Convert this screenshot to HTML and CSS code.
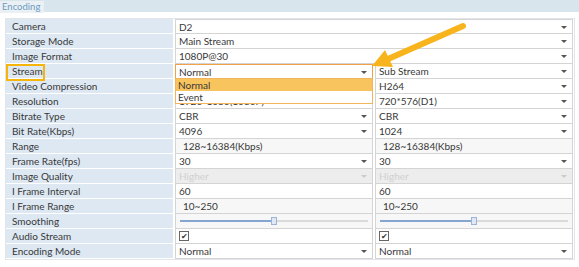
FILE: index.html
```html
<!DOCTYPE html>
<html lang="en">
<head>
    <meta charset="UTF-8">
    <title>Encoding</title>
    <link rel="stylesheet" href="styles.css">
</head>
<body>
<div class="page">
    <!-- Tab bar -->
    <div class="tabbar"><span class="tab">Encoding</span></div>

    <!-- Encoding form -->
    <div class="form">
        <div class="lbl">Camera</div>
        <div class="val sel top span2">D2</div>

        <div class="lbl">Storage Mode</div>
        <div class="val sel span2">Main Stream</div>

        <div class="lbl">Image Format</div>
        <div class="val sel span2">1080P@30</div>

        <div class="lbl mark-cell"><span class="mark"></span>Stream</div>
        <div class="val sel focus">Normal
            <div class="dropdown">
                <div class="opt on">Normal</div>
                <div class="opt">Event</div>
            </div>
        </div>
        <div class="val sel">Sub Stream</div>

        <div class="lbl">Video Compression</div>
        <div class="val sel">Normal</div>
        <div class="val sel">H264</div>

        <div class="lbl">Resolution</div>
        <div class="val sel">1920*1080(1080P)</div>
        <div class="val sel">720*576(D1)</div>

        <div class="lbl">Bitrate Type</div>
        <div class="val sel">CBR</div>
        <div class="val sel">CBR</div>

        <div class="lbl">Bit Rate(Kbps)</div>
        <div class="val sel">4096</div>
        <div class="val sel">1024</div>

        <div class="lbl">Range</div>
        <div class="val plain">128~16384(Kbps)</div>
        <div class="val plain">128~16384(Kbps)</div>

        <div class="lbl">Frame Rate(fps)</div>
        <div class="val sel">30</div>
        <div class="val sel">30</div>

        <div class="lbl">Image Quality</div>
        <div class="val sel off">Higher</div>
        <div class="val sel off">Higher</div>

        <div class="lbl">I Frame Interval</div>
        <div class="val">60</div>
        <div class="val">60</div>

        <div class="lbl">I Frame Range</div>
        <div class="val plain">10~250</div>
        <div class="val plain">10~250</div>

        <div class="lbl">Smoothing</div>
        <div class="val slider"><span class="track"><span class="fill" style="width:50%"></span><span class="knob" style="left:50%"></span></span></div>
        <div class="val slider"><span class="track"><span class="fill" style="width:50%"></span><span class="knob" style="left:50%"></span></span></div>

        <div class="lbl">Audio Stream</div>
        <div class="val"><span class="check">&#10004;</span></div>
        <div class="val"><span class="check">&#10004;</span></div>

        <div class="lbl">Encoding Mode</div>
        <div class="val sel">Normal</div>
        <div class="val sel">Normal</div>
    </div>

    <!-- Annotation arrow and mouse pointer -->
    <svg class="overlay" width="579" height="267" viewBox="0 0 579 267">
        <line x1="463" y1="26" x2="388" y2="59" stroke="#f7b41c" stroke-width="6" stroke-linecap="round"/>
        <polygon points="372,66 385,50 393,67" fill="#f7b41c"/>
        <path d="M272 68 L272 80 L275 77 L277 82 L279 81 L277 76 L281 76 Z" fill="#fff" stroke="#444" stroke-width="0.8"/>
    </svg>
</div>
</body>
</html>
```

FILE: styles.css
```css
* {
    margin: 0;
    padding: 0;
    box-sizing: border-box;
}
body {
    background: #fff;
    font-family: Lato, "Open Sans", sans-serif;
    font-size: 10px;
    color: #383838;
}
.page {
    position: relative;
    width: 579px;
    height: 267px;
    overflow: hidden;
}
.tabbar {
    height: 12px;
    background: #d9e5ec;
}
.tab {
    display: inline-block;
    height: 12px;
    padding: 0 4px 0 2px;
    background: #eaf0f3;
    color: #6a9cc4;
    font-size: 9.5px;
    line-height: 12px;
}
.form {
    display: grid;
    grid-template-columns: 167px 198px 198px;
    grid-auto-rows: 15px;
    column-gap: 2px;
    margin: 6px 4px 0 5px;
    border: 1px solid #e2e6ea;
}
.lbl {
    background: #dde8f3;
    border-bottom: 1px solid #fff;
    padding-left: 6px;
    line-height: 14px;
    white-space: nowrap;
}
.mark-cell {
    position: relative;
}
.mark {
    position: absolute;
    left: 0;
    top: 0;
    width: 39px;
    height: 17px;
    border: 2px solid #f6b50c;
}
.val {
    position: relative;
    background: #fff;
    border: 1px solid #d4d4d4;
    border-top: none;
    padding-left: 3px;
    line-height: 14px;
    white-space: nowrap;
}
.span2 {
    grid-column: span 2;
}
.top {
    border-top: 1px solid #d4d4d4;
}
.sel::after {
    content: "";
    position: absolute;
    right: 5px;
    top: 6px;
    border-left: 3px solid transparent;
    border-right: 3px solid transparent;
    border-top: 3px solid #555;
}
.focus {
    border: 1px solid #f0a24a;
    z-index: 2;
}
.dropdown {
    position: absolute;
    left: -1px;
    right: -1px;
    top: 13px;
    border: 1px solid #f2b45c;
    background: #fff;
    z-index: 3;
}
.opt {
    height: 12px;
    padding-left: 2px;
    line-height: 12px;
}
.opt.on {
    background: #f8c45e;
}
.plain {
    background: #f7f7f7;
    padding-left: 7px;
}
.off {
    background: #ededed;
    color: #d0d0d0;
}
.off::after {
    border-top-color: #ccc;
}
.slider {
    background: #f7f7f7;
    padding: 0 4px;
}
.track {
    position: absolute;
    left: 4px;
    right: 4px;
    top: 6px;
    height: 2px;
    background: #dadada;
}
.fill {
    position: absolute;
    left: 0;
    top: 0;
    height: 2px;
    background: #86a6d2;
}
.knob {
    position: absolute;
    top: -3px;
    width: 6px;
    height: 8px;
    margin-left: -3px;
    background: #dfe9f6;
    border: 1px solid #9db4d6;
}
.check {
    display: inline-block;
    width: 10px;
    height: 10px;
    margin-top: 2px;
    border: 1px solid #666;
    font-size: 8px;
    line-height: 8px;
    text-align: center;
    vertical-align: top;
}
.overlay {
    position: absolute;
    left: 0;
    top: 0;
    pointer-events: none;
}
```
